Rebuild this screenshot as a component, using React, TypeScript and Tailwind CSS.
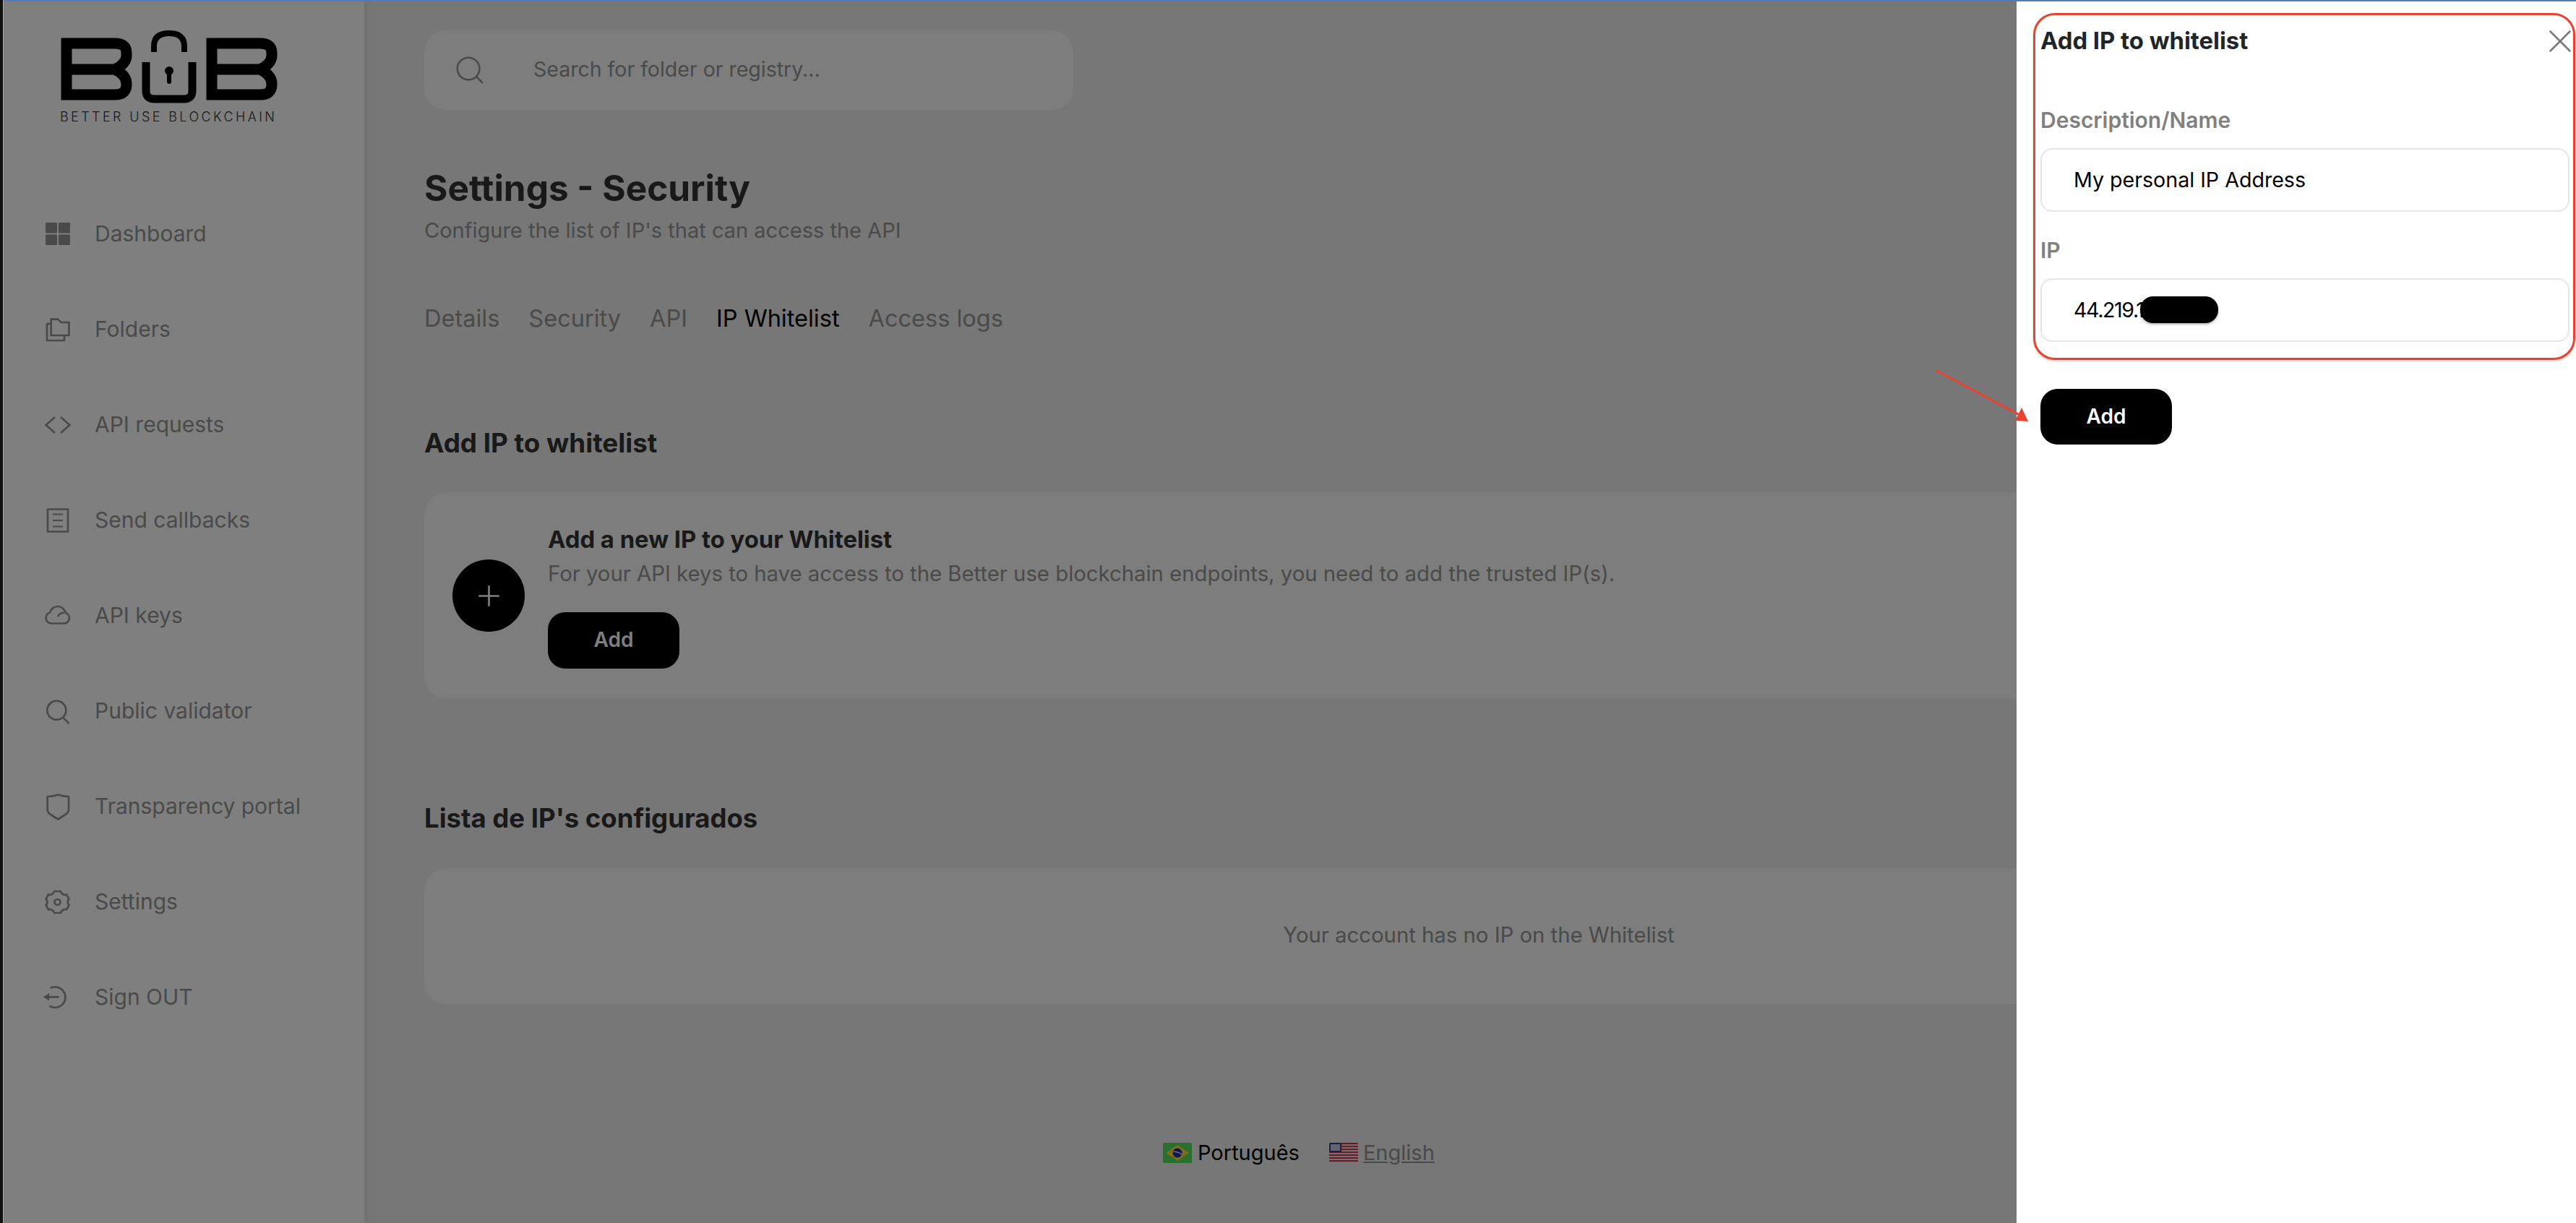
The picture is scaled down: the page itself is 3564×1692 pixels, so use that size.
import { ReactNode } from "react";
import { Plus, Search, X } from "lucide-react";

const NavIcon = ({ children }: { children: ReactNode }) => (
  <svg
    viewBox="0 0 36 36"
    className="h-9 w-9 overflow-visible fill-none stroke-[#949494] stroke-[2.7]"
    strokeLinejoin="round"
  >
    {children}
  </svg>
);

const navItems: { label: string; icon: ReactNode }[] = [
  {
    label: "Dashboard",
    icon: (
      <svg viewBox="0 0 36 36" className="h-9 w-9 fill-[#949494]">
        <rect x="1" y="2" width="16" height="14.5" rx="1" />
        <rect x="19" y="2" width="16" height="14.5" rx="1" />
        <rect x="1" y="18.5" width="16" height="14.5" rx="1" />
        <rect x="19" y="18.500" width="16" height="14.5" rx="1" />
      </svg>
    ),
  },
  {
    label: "Folders",
    icon: (
      <NavIcon>
        <path d="M8.7 3.700H18L23 8H33.500V26H8.700Z" />
        <path d="M8.700 10H3V33H27V26" />
      </NavIcon>
    ),
  },
  {
    label: "API requests",
    icon: (
      <NavIcon>
        <path d="M14 7 1.500 18 14 29" />
        <path d="M22 7 34.500 18 22 29" />
      </NavIcon>
    ),
  },
  {
    label: "Send callbacks",
    icon: (
      <NavIcon>
        <rect x="4" y="2.500" width="28" height="31" />
        <path d="M11 9.500H25M11 18H25M11 26.500H25" strokeWidth="2" />
      </NavIcon>
    ),
  },
  {
    label: "API keys",
    icon: (
      <NavIcon>
        <path d="M8.500 28.500H26.500A7.500 7.500 0 0 0 28.500 13.800A11 11 0 0 0 7 13.500A7.700 7.700 0 0 0 8.500 28.500Z" />
        <path d="M18 19.300A8 8 0 0 1 26.500 14" />
      </NavIcon>
    ),
  },
  {
    label: "Public validator",
    icon: (
      <NavIcon>
        <circle cx="16.300" cy="16.700" r="13" />
        <path d="M26 27.500 33.500 35" />
      </NavIcon>
    ),
  },
  {
    label: "Transparency portal",
    icon: (
      <NavIcon>
        <path d="M3.700 4Q12 4 18.300 1.500Q25 4 33 4V22Q33 26 29 28.500L18.300 35.500L7.500 28.500Q3.700 26 3.700 22Z" />
      </NavIcon>
    ),
  },
  {
    label: "Settings",
    icon: (
      <NavIcon>
        <path d="M13 3H22Q23 7 26 7.500Q28.500 8.500 30 7.500L33.500 14Q31.500 16 31.500 18Q31.500 20 33.500 22L30 28.500Q28 27.500 26 28.500Q23 29.500 22 33H13Q12 29.500 9 28.500Q7 27.500 5 28.500L1.500 22Q3.500 20 3.500 18Q3.500 16 1.500 14L5 7.500Q7 8.500 9 7.500Q12 7 13 3Z" />
        <circle cx="17.500" cy="18" r="4" />
      </NavIcon>
    ),
  },
  {
    label: "Sign OUT",
    icon: (
      <NavIcon>
        <path d="M7.500 5A14.300 14.300 0 1 1 6.300 29.700" />
        <path d="M19.700 17.300H4" />
        <path d="M-2 17.300 6 12V22.700Z" className="fill-[#949494] stroke-none" />
      </NavIcon>
    ),
  },
];

const tabs = ["Details", "Security", "API", "IP Whitelist", "Access logs"];

const Logo = () => (
  <div className="h-[258px] pl-[83px] pt-[42px]">
    <svg viewBox="0 0 302 102" className="h-[102px] w-[302px] fill-none stroke-black">
      <path
        d="M9 89V18H76Q92 18 92 31V35Q92 46 76 54Q92 62 92 74V75Q92 89 76 89Z M9 54H76"
        strokeWidth="15"
      />
      <path d="M119 44V84Q119 95 131 95H171Q183 95 183 84V44" strokeWidth="11" />
      <path d="M130 30V22Q130 4 151 4Q172 4 172 22V30" strokeWidth="8" />
      <circle cx="151" cy="56" r="6" className="fill-black stroke-none" />
      <path d="M151 58V71" strokeWidth="6" strokeLinecap="round" />
      <path
        d="M210 89V18H277Q293 18 293 31V35Q293 46 277 54Q293 62 293 74V75Q293 89 277 89Z M210 54H277"
        strokeWidth="15"
      />
    </svg>
    <div className="mt-[5px] text-[18px] leading-[26px] font-light tracking-[3.400px] whitespace-nowrap text-[#333]">
      BETTER USE BLOCKCHAIN
    </div>
  </div>
);

const Sidebar = () => (
  <aside className="h-[1692px] w-[504px] shrink-0 bg-white shadow-[2px_0_12px_rgba(0,0,0,0.08)]">
    <Logo />
    <nav>
      {navItems.map((item) => (
        <div key={item.label} className="flex h-[132px] items-center pl-[62px] text-[30px] text-[#949494]">
          <span className="flex w-[69px] shrink-0">{item.icon}</span>
          <span className="pb-[2px]">{item.label}</span>
        </div>
      ))}
    </nav>
  </aside>
);

const BrazilFlag = () => (
  <svg viewBox="0 0 40 28" className="h-[28px] w-[40px] rounded-[2px]">
    <rect width="40" height="28" fill="#52df5a" />
    <path d="M20 3 36 14 20 25 4 14Z" fill="#ffd83a" />
    <circle cx="20" cy="14" r="6.500" fill="#1a2f9c" />
    <path d="M14 12.500Q20 11.500 26 16" stroke="#eee" strokeWidth="1.200" fill="none" />
  </svg>
);

const UsFlag = () => (
  <svg viewBox="0 0 40 28" className="h-[28px] w-[40px] rounded-[2px]">
    <rect width="40" height="28" fill="#f4f4f4" />
    {[0, 4, 8, 12, 16, 20, 24].map((y) => (
      <rect key={y} y={y} width="40" height="2.200" fill="#d8344a" />
    ))}
    <rect width="17" height="13" fill="#3c3f8f" />
    <rect x="2" y="2" width="13" height="9" fill="#c9c9dc" />
  </svg>
);

const Main = () => (
  <main className="min-w-0 flex-1 pt-[42px] pr-[59px] pl-[83px]">
    <div className="flex h-[110px] w-[898px] items-center rounded-[30px] bg-[#fafafa]">
      <Search className="ml-[40px] h-[46px] w-[46px] text-[#949494]" strokeWidth={1.300} />
      <span className="ml-[65px] pb-[2px] text-[28.500px] text-[#949494]">Search for folder or registry...</span>
    </div>
    <h1 className="mt-[78px] text-[49.500px] leading-[60px] font-bold text-[#333]">Settings - Security</h1>
    <p className="mt-[7px] text-[29px] leading-[44px] text-[#949494]">Configure the list of IP's that can access the API</p>
    <div className="mt-[78px] flex gap-[40px] text-[32.500px] leading-[44px] text-[#949494]">
      {tabs.map((tab) => (
        <span key={tab} className={tab === "IP Whitelist" ? "text-black" : ""}>
          {tab}
        </span>
      ))}
    </div>
    <h2 className="mt-[126px] text-[36.800px] leading-[48px] font-bold text-[#333]">Add IP to whitelist</h2>
    <div className="mt-[45px] flex h-[284px] items-center rounded-[30px] bg-[#fafafa] pl-[39px]">
      <div className="flex h-[100px] w-[100px] shrink-0 items-center justify-center rounded-full bg-black text-white">
        <Plus className="h-[45px] w-[45px]" strokeWidth={1.400} />
      </div>
      <div className="ml-[32px]">
        <div className="text-[32.800px] leading-[44px] font-bold text-[#333]">Add a new IP to your Whitelist</div>
        <div className="mt-[4px] text-[29.300px] leading-[44px] text-[#949494]">
          For your API keys to have access to the Better use blockchain endpoints, you need to add the trusted IP(s).
        </div>
        <button className="mt-[31px] h-[78px] w-[182px] rounded-[24px] bg-black pb-[2px] text-[28px] font-semibold text-white">Add</button>
      </div>
    </div>
    <h2 className="mt-[142px] text-[36.500px] leading-[48px] font-bold text-[#333]">Lista de IP's configurados</h2>
    <div className="mt-[46px] flex h-[187px] items-center justify-center rounded-[30px] bg-[#fafafa] pb-[3px] text-[29.300px] text-[#949494]">
      Your account has no IP on the Whitelist
    </div>
    <div className="mt-[184px] flex items-center pl-[1022px] text-[29px] leading-[44px]">
      <BrazilFlag />
      <span className="ml-[8px] text-black">Português</span>
      <span className="ml-[41px]"><UsFlag /></span>
      <span className="ml-[7px] text-[#949494] underline">English</span>
    </div>
  </main>
);

const WhitelistPanel = () => (
  <section className="absolute top-0 right-0 bottom-0 z-20 w-[774px] bg-white pt-[35px] pr-[9px] pl-[33px]">
    <div className="flex h-[44px] items-center justify-between">
      <h3 className="text-[32.800px] font-bold text-[#212529]">Add IP to whitelist</h3>
      <X className="h-[54px] w-[54px] translate-x-[14px] text-[#777]" strokeWidth={1.100} />
    </div>
    <label className="mt-[65px] block text-[30px] leading-[44px] font-semibold text-[#808080]">Description/Name</label>
    <div className="mt-[17px] flex h-[88px] items-center rounded-[16px] border-2 border-[#e6e6e6] pl-[44px] text-[28.600px] text-black">
      My personal IP Address
    </div>
    <label className="mt-[31px] block text-[30px] leading-[44px] font-semibold text-[#808080]">IP</label>
    <div className="relative mt-[17px] flex h-[88px] items-center rounded-[16px] border-2 border-[#e6e6e6] pl-[44px] text-[28.600px] tracking-[-1.400px] text-black">
      44.219.1
      <span className="absolute top-[23px] left-[136px] h-[37px] w-[108px] rounded-[18px] bg-black shadow-[0_2px_3px_rgba(0,0,0,0.3)]" />
    </div>
    <button className="mt-[65px] h-[77px] w-[182px] rounded-[24px] bg-black pb-[2px] text-[28px] font-semibold text-white">Add</button>
    {/* red annotation round the form */}
    <div className="absolute top-[18px] left-[23px] h-[480px] w-[750px] rounded-[30px] border-[3px] border-[#e8432e] shadow-[0_2px_3px_rgba(0,0,0,0.2)]" />
  </section>
);

const App = () => (
  <div className="relative flex h-[1692px] w-[3564px] overflow-hidden bg-[#eeeeee] font-['Inter','Liberation_Sans',sans-serif]">
    <Sidebar />
    <Main />
    <div className="absolute inset-0 z-10 bg-black/50" />
    <WhitelistPanel />
    {/* annotation arrow */}
    <svg viewBox="0 0 3564 1692" className="pointer-events-none absolute inset-0 z-30 h-[1692px] w-[3564px]">
      <path d="M2678 512 2796 575" stroke="#e8432e" strokeWidth="3" />
      <path d="M2806 583 2788 582 2797 564Z" fill="#e8432e" />
    </svg>
    {/* capture edges */}
    <div className="absolute inset-x-0 top-0 z-40 h-[2px] bg-[#4f7ab5]" />
    <div className="absolute inset-y-0 left-0 z-40 w-[4px] bg-[#111]" />
    <div className="absolute inset-y-0 left-[4px] z-40 w-[1px] bg-[#aaa]" />
  </div>
);

export default App;
